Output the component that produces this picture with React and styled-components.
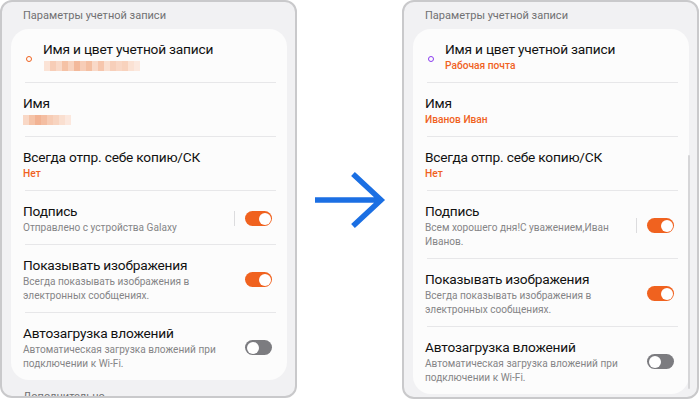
import styled, { createGlobalStyle } from "styled-components"

const GlobalStyle = createGlobalStyle`
    html, body {
        margin: 0;
        padding: 0;
        background: #ffffff;
    }
    body {
        font-family: Roboto, "Noto Sans", sans-serif;
    }
`

const Page = styled.div`
    width: 700px;
    height: 400px;
    display: flex;
    align-items: flex-start;
    background: #ffffff;
    overflow: hidden;
`

const Phone = styled.div`
    position: relative;
    box-sizing: border-box;
    width: 297px;
    height: ${props => props.$height}px;
    border: 2px solid #c9c9cb;
    border-radius: 12px;
    background: #f1f1f3;
    overflow: hidden;
    flex-shrink: 0;
`

const SectionHeading = styled.div`
    height: 27px;
    padding: 0 0 0 21px;
    display: flex;
    align-items: center;
    font-size: 11px;
    color: #707072;
`

const Card = styled.div`
    margin: 0 8px 0 9px;
    background: #fcfcfc;
    border-radius: 18px;
`

const Row = styled.div`
    display: flex;
    align-items: center;
    padding: 11px 15px 9px 12px;
`

const Divider = styled.div`
    height: 1px;
    background: #e7e7e9;
    margin: 0 11px 0 14px;
`

const Dot = styled.span`
    width: 4px;
    height: 4px;
    border-radius: 50%;
    border: 1.5px solid ${props => props.$color};
    margin: 4px 11px 0 3px;
    flex-shrink: 0;
`

const TextBlock = styled.div`
    flex: 1;
    min-width: 0;
`

const Title = styled.div`
    font-size: 13.7px;
    line-height: 18px;
    letter-spacing: -0.2px;
    color: #111111;
`

const Sub = styled.div`
    font-size: 10.1px;
    line-height: 14px;
    color: #858587;
    margin-top: 1px;
`

const Value = styled.div`
    font-size: 10.2px;
    line-height: 14px;
    font-weight: 500;
    color: #f0621f;
    margin-top: 1px;
`

const Blur = styled.div`
    display: flex;
    height: 10px;
    margin: 3px 0 2px ${props => props.$indent}px;
`

const BlurCell = styled.span`
    width: 6px;
    height: 10px;
    background: ${props => props.$c};
`

const Separator = styled.span`
    width: 1px;
    height: 15px;
    background: #dcdcde;
    margin: 0 10px 0 8px;
`

const Toggle = styled.span`
    position: relative;
    box-sizing: border-box;
    width: 27px;
    height: 15px;
    border-radius: 8px;
    background: ${props => (props.$on ? "#f0621f" : "#7c7c80")};
    flex-shrink: 0;

    &::after {
        content: "";
        position: absolute;
        top: 1.5px;
        left: ${props => (props.$on ? "13.5px" : "1.5px")};
        width: 12px;
        height: 12px;
        border-radius: 50%;
        background: #ffffff;
    }
`

const Scrollbar = styled.span`
    position: absolute;
    right: 7px;
    top: 153px;
    width: 2px;
    height: 234px;
    border-radius: 1px;
    background: #d6d6d8;
`

const ArrowBox = styled.div`
    width: 105px;
    height: 400px;
    display: flex;
    align-items: center;
    justify-content: center;
    flex-shrink: 0;
`

const MoreHeading = styled.div`
    padding: 10px 0 0 21px;
    font-size: 11px;
    color: #707072;
`

const blur1 = ["#fbe3d6", "#f7cdb7", "#f9d9c8", "#f5c2a6", "#f8d3bf", "#f3b99b", "#f7cdb7", "#f4bfa2",
    "#f9d9c8", "#f6c6ad", "#fadfd0", "#f7cfba", "#f9d7c5", "#f8d2bd", "#fbe2d4", "#fce9df"]
const blur2 = ["#f9d8c6", "#f5c3a8", "#f2b394", "#f4bea2", "#f7ccb5", "#f8d4c0", "#fadfd0", "#fce8de"]

const Pixelated = ({ cells, indent }) => (
    <Blur $indent={indent}>
        {cells.map((c, i) => (
            <BlurCell key={i} $c={c} />
        ))}
    </Blur>
)

const Arrow = () => (
    <svg width="74" height="56" viewBox="0 0 74 56">
        <path d="M2 28 H68 M40 2 L68 28 L40 54" fill="none" stroke="#1b6fe3" strokeWidth="5.5" />
    </svg>
)

const SettingsList = ({ dotColor, account, name, signature, blurred }) => (
    <Card>
        <Row>
            <Dot $color={dotColor} />
            <TextBlock>
                <Title>Имя и цвет учетной записи</Title>
                {blurred ? <Pixelated cells={blur1} indent={1} /> : <Value>{account}</Value>}
            </TextBlock>
        </Row>
        <Divider />
        <Row>
            <TextBlock>
                <Title>Имя</Title>
                {blurred ? <Pixelated cells={blur2} indent={0} /> : <Value>{name}</Value>}
            </TextBlock>
        </Row>
        <Divider />
        <Row>
            <TextBlock>
                <Title>Всегда отпр. себе копию/СК</Title>
                <Value>Нет</Value>
            </TextBlock>
        </Row>
        <Divider />
        <Row>
            <TextBlock>
                <Title>Подпись</Title>
                <Sub>{signature}</Sub>
            </TextBlock>
            <Separator />
            <Toggle $on />
        </Row>
        <Divider />
        <Row>
            <TextBlock>
                <Title>Показывать изображения</Title>
                <Sub>Всегда показывать изображения в<br />электронных сообщениях.</Sub>
            </TextBlock>
            <Toggle $on />
        </Row>
        <Divider />
        <Row>
            <TextBlock>
                <Title>Автозагрузка вложений</Title>
                <Sub>Автоматическая загрузка вложений при<br />подключении к Wi-Fi.</Sub>
            </TextBlock>
            <Toggle />
        </Row>
    </Card>
)

const App = () => {
    return (
        <Page>
            <GlobalStyle />
            <Phone $height={398}>
                <SectionHeading>Параметры учетной записи</SectionHeading>
                <SettingsList
                    dotColor="#f0621f"
                    signature="Отправлено с устройства Galaxy"
                    blurred
                />
                <MoreHeading>Дополнительно</MoreHeading>
            </Phone>
            <ArrowBox>
                <Arrow />
            </ArrowBox>
            <Phone $height={399}>
                <SectionHeading>Параметры учетной записи</SectionHeading>
                <SettingsList
                    dotColor="#8a3cf0"
                    account="Рабочая почта"
                    name="Иванов Иван"
                    signature={<>Всем хорошего дня!С уважением,Иван<br />Иванов.</>}
                />
                <Scrollbar />
            </Phone>
        </Page>
    )
}

export default App
